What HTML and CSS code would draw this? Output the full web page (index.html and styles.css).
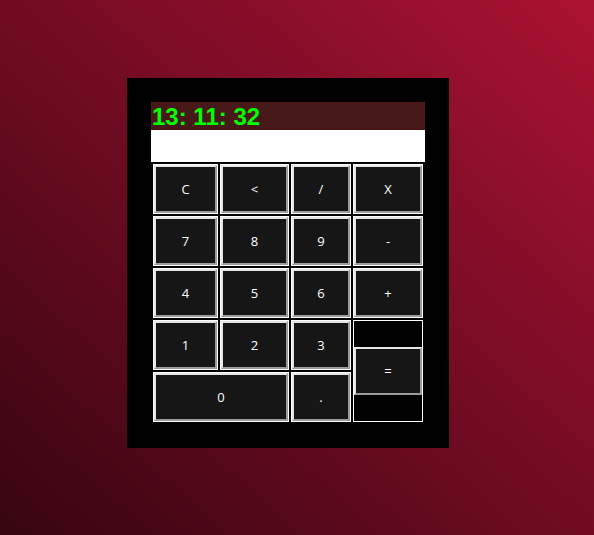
FILE: index.html
```html
<!DOCTYPE html>
<html>
<head>
<meta charset="utf-8">
<link rel="stylesheet" href="styles.css">
</head>
<body>
<div class="page">
  <div class="calc">
    <div class="clock">13: 11: 32</div>
    <input class="screen" type="text">
    <div class="keys">
      <div class="cell"><button class="key">C</button></div>
      <div class="cell"><button class="key">&lt;</button></div>
      <div class="cell"><button class="key">/</button></div>
      <div class="cell"><button class="key">X</button></div>
      <div class="cell"><button class="key">7</button></div>
      <div class="cell"><button class="key">8</button></div>
      <div class="cell"><button class="key">9</button></div>
      <div class="cell"><button class="key">-</button></div>
      <div class="cell"><button class="key">4</button></div>
      <div class="cell"><button class="key">5</button></div>
      <div class="cell"><button class="key">6</button></div>
      <div class="cell"><button class="key">+</button></div>
      <div class="cell"><button class="key">1</button></div>
      <div class="cell"><button class="key">2</button></div>
      <div class="cell"><button class="key">3</button></div>
      <div class="cell cell-tall"><button class="key">=</button></div>
      <div class="cell cell-wide"><button class="key">0</button></div>
      <div class="cell"><button class="key">.</button></div>
    </div>
  </div>
</div>
</body>
</html>
```
FILE: styles.css
```css
html, body {
  margin: 0;
  padding: 0;
  height: 100%;
}
body {
  background: linear-gradient(to top right, #36050f, #ab1233);
  font-family: "Open Sans", "DejaVu Sans", sans-serif;
}
.page {
  padding: 78px 0 0 127px;
}
.calc {
  width: 274px;
  padding: 24px;
  background: #000;
}
.clock {
  height: 28px;
  background: #471818;
  color: #00ff00;
  font-family: "Liberation Sans", Arial, sans-serif;
  font-weight: bold;
  font-size: 24px;
  line-height: 30px;
  padding-left: 1px;
  overflow: hidden;
}
.screen {
  display: block;
  width: 274px;
  height: 32px;
  box-sizing: border-box;
  border: none;
  margin: 0;
  padding: 0;
  background: #fff;
  outline: none;
}
.keys {
  display: grid;
  grid-template-columns: 65px 69px 60px 70px;
  grid-template-rows: repeat(5, 50px);
  gap: 2px;
  padding: 2px;
}
.cell {
  border: 1px solid #fff;
  display: flex;
  align-items: center;
  box-sizing: border-box;
}
.cell-tall {
  grid-column: 4;
  grid-row: 4 / span 2;
}
.cell-wide {
  grid-column: 1 / span 2;
}
.key {
  width: 100%;
  height: 48px;
  margin: 0;
  padding: 0;
  background: #161616;
  color: #fff;
  font-family: "Open Sans", "DejaVu Sans", sans-serif;
  font-size: 13px;
  border-style: solid;
  border-width: 2px;
  border-color: #e6e6e6 #9c9c9c #9c9c9c #e6e6e6;
  box-sizing: border-box;
}
```
